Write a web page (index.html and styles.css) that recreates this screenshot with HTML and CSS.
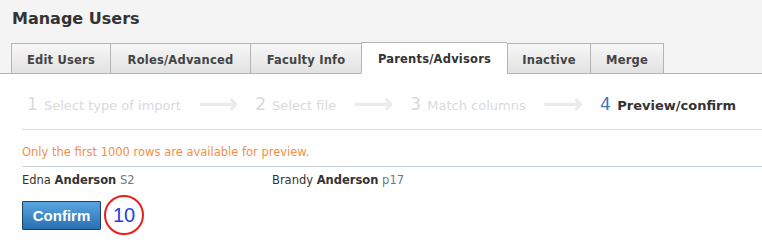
FILE: index.html
```html
<!DOCTYPE html>
<html>
<head>
<meta charset="UTF-8">
<title>Manage Users</title>
<link rel="stylesheet" href="styles.css">
</head>
<body>

<div class="header">
    <h1 class="title">Manage Users</h1>
    <ul class="tabs">
        <li class="tab t-edit">Edit Users</li>
        <li class="tab t-roles">Roles/Advanced</li>
        <li class="tab t-faculty">Faculty Info</li>
        <li class="tab t-parents active">Parents/Advisors</li>
        <li class="tab t-inactive">Inactive</li>
        <li class="tab t-merge">Merge</li>
    </ul>
</div>

<div class="content">
    <div class="steps">
        <div class="step"><span class="num">1</span> Select type of import</div>
        <div class="arrow">&#10230;</div>
        <div class="step"><span class="num">2</span> Select file</div>
        <div class="arrow">&#10230;</div>
        <div class="step"><span class="num">3</span> Match columns</div>
        <div class="arrow">&#10230;</div>
        <div class="step current"><span class="num">4</span> Preview/confirm</div>
    </div>

    <p class="notice">Only the first 1000 rows are available for preview.</p>

    <div class="rows">
        <div class="person">Edna <b>Anderson</b> <span class="grade">S2</span></div>
        <div class="person">Brandy <b>Anderson</b> <span class="grade">p17</span></div>
    </div>

    <div class="actions">
        <button class="confirm">Confirm</button>
        <span class="count">10</span>
    </div>
</div>

</body>
</html>
```

FILE: styles.css
```css
html, body {
    margin: 0; padding: 0;
    background: #FFF;
    font-family: "DejaVu Sans", "Liberation Sans", sans-serif; font-size: 11.5px;
    color: #333;
}
ul, li { list-style-type: none; margin: 0; padding: 0; }

.header {
    background: #F4F4F4;
    border-bottom: 1px solid #B4B4B4;
    padding: 0 0 0 11px;
}
    .title {
        margin: 0; padding: 9px 0 0 1px; height: 43px; box-sizing: border-box;
        font-size: 16px; font-weight: bold; color: #333;
    }

.tabs { display: flex; height: 31px; margin-bottom: -1px; }
    .tab {
        box-sizing: border-box; height: 31px; padding-top: 3px;
        border: 1px solid #B4B4B4; border-right: none;
        background: linear-gradient(#F7F7F7, #E2E2E2);
        font-size: 11.5px; font-weight: bold; color: #444;
        display: flex; align-items: center; justify-content: center;
        letter-spacing: .2px;
    }
    .tab:last-child { border-right: 1px solid #B4B4B4; }
    .tab.active {
        background: #FFF; color: #333;
        border-bottom-color: #FFF;
        height: 32px; margin-top: -1px;
        padding-top: 1px;
    }
    .t-edit     { width: 99px; }
    .t-roles    { width: 140px; }
    .t-faculty  { width: 111px; }
    .t-parents  { width: 146px; }
    .t-inactive { width: 83px; }
    .t-merge    { width: 74px; }

.content { padding: 0 0 0 22px; }

.steps {
    display: flex; align-items: center; justify-content: space-between;
    height: 56px; border-bottom: 1px solid #DDD;
    font-size: 13px; color: #DADADA;
    padding: 4px 26px 0 5px; box-sizing: border-box;
}
    .step { white-space: nowrap; }
    .step .num { font-size: 17px; margin-right: 2px; }
    .arrow { font-size: 28px; color: #EBEBEB; font-weight: bold; line-height: 1; }
    .step.current { color: #333; font-weight: bold; }
    .step.current .num { color: #3C78B4; font-weight: normal; }

.notice {
    margin: 0; padding: 15px 0 7px;
    color: #F0904A; font-size: 11.5px;
    border-bottom: 1px solid #CBD3DB;
}

.rows { display: flex; padding-top: 6px; height: 21px; color: #333; }
    .person { width: 250px; }
    .grade { color: #6A7A8C; }

.actions { display: flex; align-items: center; padding-top: 1px; }
    .confirm {
        width: 79px; height: 29px;
        border: 1px solid #17426A; border-radius: 1px;
        background: linear-gradient(#5AA5E0, #2A6FB4);
        color: #FFF; font-family: "Liberation Sans", sans-serif; font-size: 15px; font-weight: bold;
        padding: 0; cursor: pointer;
    }
    .count {
        width: 36px; height: 36px; margin-left: 3px;
        border: 2px solid #E8201A; border-radius: 50%;
        display: flex; align-items: center; justify-content: center;
        font-family: "Liberation Sans", sans-serif; font-size: 20px; color: #2840E0;
    }
```
